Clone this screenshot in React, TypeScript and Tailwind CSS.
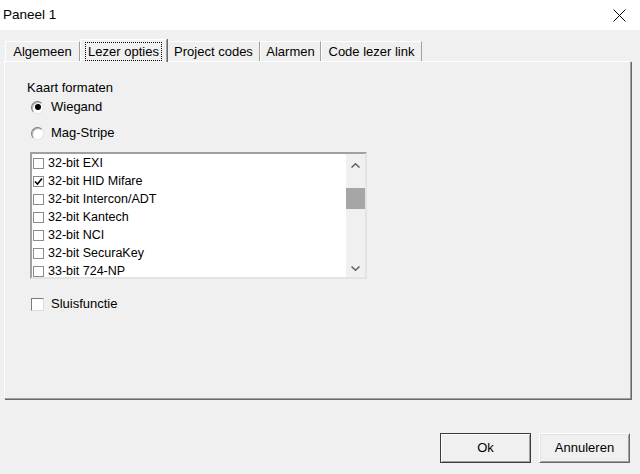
import React from "react";

const formats = [
  { label: "32-bit EXI", checked: false },
  { label: "32-bit HID Mifare", checked: true },
  { label: "32-bit Intercon/ADT", checked: false },
  { label: "32-bit Kantech", checked: false },
  { label: "32-bit NCI", checked: false },
  { label: "32-bit SecuraKey", checked: false },
  { label: "33-bit 724-NP", checked: false },
];

const tabs = [
  { label: "Algemeen", w: "w-[75px]" },
  { label: "Lezer opties", w: "w-[87px]", active: true },
  { label: "Project codes", w: "w-[93px]" },
  { label: "Alarmen", w: "w-[61px]" },
  { label: "Code lezer link", w: "w-[101px]" },
];

function Radio({ on }: { on?: boolean }) {
  return (
    <span className="flex h-[13px] w-[13px] items-center justify-center rounded-full border border-t-[#7a7a7a] border-l-[#7a7a7a] border-r-[#e3e3e3] border-b-[#e3e3e3] bg-white shadow-[inset_1px_1px_0_#b4b4b4]">
      {on && <span className="h-[6px] w-[6px] rounded-full bg-black" />}
    </span>
  );
}

function Chevron({ up }: { up?: boolean }) {
  return (
    <svg width="9" height="5" viewBox="0 0 9 5">
      <path
        d={up ? "M0.5 4.5 L4.5 0.8 L8.5 4.5" : "M0.5 0.5 L4.5 4.2 L8.5 0.5"}
        fill="none"
        stroke="#606060"
        strokeWidth="1.5"
      />
    </svg>
  );
}

export default function App() {
  return (
    <div className="h-[474px] w-[640px] overflow-hidden bg-[#f0f0f0] font-['Liberation_Sans',Arial,sans-serif] text-[13px] text-black">
      {/* Title bar */}
      <div className="flex h-[30px] items-center justify-between bg-white pl-[3px] pr-[14px]">
        <span className="text-[13.5px]">Paneel 1</span>
        <svg width="13" height="13" viewBox="0 0 13 13">
          <path d="M0.5 0.5 L12.5 12.5 M12.5 0.5 L0.5 12.5" stroke="#000" strokeWidth="1" />
        </svg>
      </div>

      {/* Tabs */}
      <div className="ml-[5px] mt-[9px] flex h-[22px] items-end">
        {tabs.map((t) =>
          t.active ? (
            <div
              key={t.label}
              className={`${t.w} relative z-10 -mb-[1px] flex h-[23px] items-start justify-center border-l border-t border-r border-l-white border-t-white border-r-[#a0a0a0] bg-[#f0f0f0] pt-[2px] shadow-[1px_0_0_#696969]`}
            >
              <span className="border border-dotted border-black px-[2px] leading-[17px]">{t.label}</span>
            </div>
          ) : (
            <div
              key={t.label}
              className={`${t.w} flex h-[20px] items-center justify-center border-l border-t border-r border-l-white border-t-white border-r-[#a0a0a0] leading-[16px]`}
            >
              {t.label}
            </div>
          )
        )}
      </div>

      {/* Panel */}
      <div className="ml-[4px] h-[338px] w-[627px] border border-t-white border-l-white border-r-[#a0a0a0] border-b-[#a0a0a0] shadow-[1px_1px_0_#696969]">
        <div className="ml-[22px] mt-[18px] leading-[16px]">Kaart formaten</div>

        <div className="ml-[26px] mt-[3px] flex h-[16px] items-center gap-[7px]">
          <Radio on />
          <span>Wiegand</span>
        </div>
        <div className="ml-[26px] mt-[10px] flex h-[16px] items-center gap-[7px]">
          <Radio />
          <span>Mag-Stripe</span>
        </div>

        {/* Card format list */}
        <div className="ml-[25px] mt-[11px] flex h-[127px] w-[337px] border-2 border-t-[#a0a0a0] border-l-[#a0a0a0] border-r-[#e3e3e3] border-b-[#e3e3e3] bg-white">
          <div className="flex-1">
            {formats.map((f) => (
              <div key={f.label} className="flex h-[18px] items-center pl-[1px] text-[12.5px]">
                <span className="mr-[4px] flex h-[11px] w-[11px] items-center justify-center border border-[#8c8c8c] bg-white">
                  {f.checked && (
                    <svg width="9" height="9" viewBox="0 0 9 9">
                      <path d="M1 4.5 L3.5 7 L8 1.5" fill="none" stroke="#000" strokeWidth="1.6" />
                    </svg>
                  )}
                </span>
                {f.label}
              </div>
            ))}
          </div>
          <div className="flex w-[19px] flex-col bg-[#f0f0f0]">
            <div className="flex h-[22px] items-center justify-center">
              <Chevron up />
            </div>
            <div className="h-[12px]" />
            <div className="h-[21px] bg-[#a6a6a6]" />
            <div className="flex-1" />
            <div className="flex h-[18px] items-center justify-center">
              <Chevron />
            </div>
          </div>
        </div>

        <div className="ml-[26px] mt-[17px] flex h-[16px] items-center gap-[7px]">
          <span className="h-[13px] w-[13px] border border-t-[#7a7a7a] border-l-[#7a7a7a] border-r-[#dcdcdc] border-b-[#dcdcdc] bg-white" />
          <span>Sluisfunctie</span>
        </div>
      </div>

      {/* Buttons */}
      <div className="mt-[34px] flex justify-end gap-[8px] pr-[10px]">
        <button className="flex h-[30px] w-[91px] items-center justify-center border border-[#3c3c3c] bg-[#f0f0f0] shadow-[inset_1px_1px_0_#fff,inset_-1px_-1px_0_#a0a0a0]">
          Ok
        </button>
        <button className="flex h-[30px] w-[91px] items-center justify-center border border-t-white border-l-white border-r-[#696969] border-b-[#696969] bg-[#f0f0f0] shadow-[inset_1px_1px_0_#e3e3e3,inset_-1px_-1px_0_#a0a0a0]">
          Annuleren
        </button>
      </div>
    </div>
  );
}
